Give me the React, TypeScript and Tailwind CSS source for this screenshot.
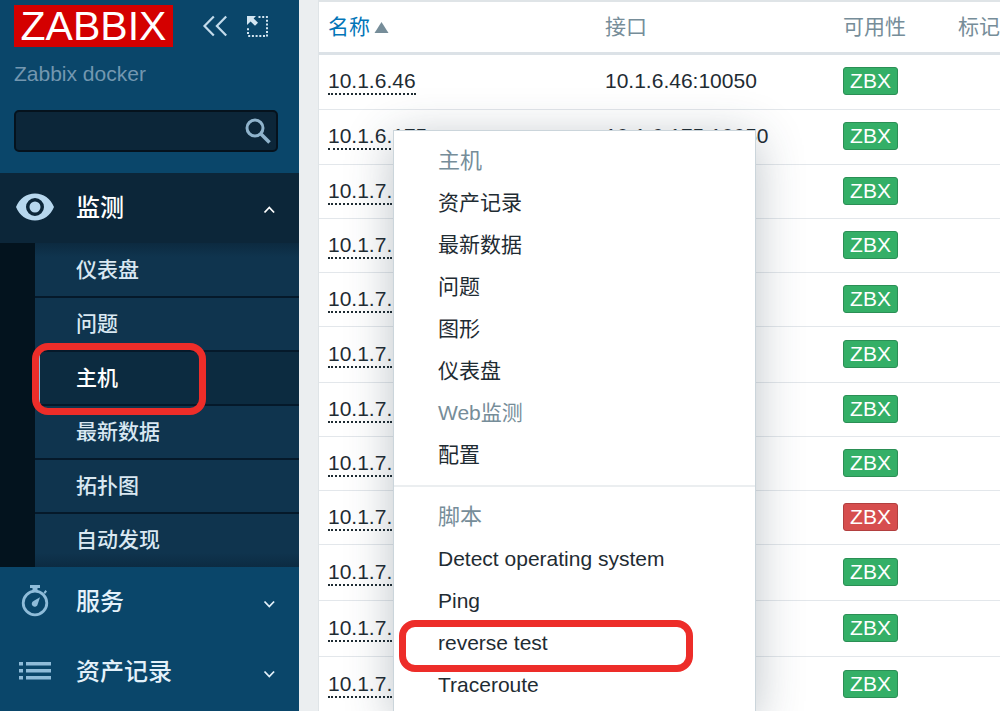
import type { ReactNode } from "react";

type Host = { name: string; address?: string; available: boolean; height: string };

const hosts: Host[] = [
  { name: "10.1.6.46", address: "10.1.6.46:10050", available: true, height: "h-[54px]" },
  { name: "10.1.6.175", address: "10.1.6.175:10050", available: true, height: "h-[55px]" },
  { name: "10.1.7.", available: true, height: "h-[54px]" },
  { name: "10.1.7.", available: true, height: "h-[54px]" },
  { name: "10.1.7.", available: true, height: "h-[54px]" },
  { name: "10.1.7.", available: true, height: "h-[56px]" },
  { name: "10.1.7.", available: true, height: "h-[54px]" },
  { name: "10.1.7.", available: true, height: "h-[54px]" },
  { name: "10.1.7.", available: false, height: "h-[54px]" },
  { name: "10.1.7.", available: true, height: "h-[56px]" },
  { name: "10.1.7.", available: true, height: "h-[56px]" },
  { name: "10.1.7.", available: true, height: "h-[56px]" },
];

const monitoring = ["仪表盘", "问题", "主机", "最新数据", "拓扑图", "自动发现"];
const hostActions = ["资产记录", "最新数据", "问题", "图形", "仪表盘", "Web监测", "配置"];
const scripts = ["Detect operating system", "Ping", "reverse test", "Traceroute"];

function Chevron({ up = false }: { up?: boolean }) {
  return (
    <svg className="h-3 w-3" viewBox="0 0 12 12" fill="none" stroke="currentColor" strokeWidth="1.800">
      <path d={up ? "M1.500 10.500 6.300 5.500l4.800 5" : "M1.500 5.500 6.300 10.500l4.800-5"} />
    </svg>
  );
}

function EyeIcon() {
  return (
    <svg className="h-10 w-10" viewBox="0 0 40 40">
      <path
        fill="#b7d7ee"
        fillRule="evenodd"
        d="M1 19C4.500 10.500 11.500 5.500 20 5.500S35.500 10.500 39 19C35.500 27.500 28.500 32.500 20 32.500S4.500 27.500 1 19ZM20 10a9 9 0 1 0 0 18a9 9 0 0 0 0-18ZM20 13.500a5.500 5.500 0 1 1 0 11a5.500 5.500 0 0 1 0-11Z"
      />
    </svg>
  );
}

function StopwatchIcon() {
  return (
    <svg className="h-10 w-10" viewBox="0 0 40 40">
      <circle cx="20" cy="21" r="11.800" fill="none" stroke="#8fbcd9" strokeWidth="2.800" />
      <path fill="#8fbcd9" d="M15 3h10v3h-2.500v3h-5V6H15ZM28.500 10.500l2-2.500 1.500 1.500-2 2.500ZM25 15.200l-2.300 7a3 3 0 1 1-4.200-3.200Z" />
    </svg>
  );
}

function ListIcon() {
  return (
    <svg className="h-10 w-10" viewBox="0 0 40 40" fill="#8fbcd9">
      <path d="M4 10h4v3.500H4ZM11 10h25v3.500H11ZM4 17h4v3.500H4ZM11 17h25v3.500H11ZM4 24h4v3.500H4ZM11 24h25v3.500H11Z" />
    </svg>
  );
}

function SectionButton({ icon, label, open = false }: { icon: ReactNode; label: string; open?: boolean }) {
  return (
    <button
      type="button"
      aria-expanded={open}
      className={
        open
          ? "flex h-[70px] w-full items-center bg-[#0c2639] pr-6 pl-[15px] text-white"
          : "flex h-[70px] w-full items-center pr-6 pl-[15px] text-[#e4f1fa]"
      }
    >
      {icon}
      <span className="ml-[21px] flex-1 text-left text-[24px] leading-8 font-medium">{label}</span>
      <Chevron up={open} />
    </button>
  );
}

function Sidebar() {
  return (
    <aside className="flex w-[299px] shrink-0 flex-col bg-[#0a466a]">
      <div className="px-[14px] pt-[5px]">
        <div className="flex items-center">
          <a href="#home" className="flex h-[42px] w-[159px] items-center justify-center bg-[#d40000] text-[41px] leading-[42px] text-white">
            ZABBIX
          </a>
          <button type="button" aria-label="Collapse" className="ml-7">
            <svg className="h-6 w-7" viewBox="0 0 28 24" fill="none" stroke="#c3dbeb" strokeWidth="2.200">
              <path d="m12.800 2.500-9.300 9.500 9.300 9.500M25.200 2.500 15.900 12l9.300 9.500" />
            </svg>
          </button>
          <button type="button" aria-label="Hide" className="ml-4">
            <svg className="h-6 w-6" viewBox="0 0 24 24">
              <path fill="#d3e5f1" d="M2 2h9L8.600 4.400l4.400 4.400-3 3-4.400-4.400L2 11Z" />
              <path
                fill="none"
                stroke="#d3e5f1"
                strokeWidth="2"
                strokeDasharray="2 1.700"
                d="M13.500 3H23M22 5.800V23M20 22H2M3 20V12.500"
              />
            </svg>
          </button>
        </div>
        <p className="mt-[13px] text-[21px] leading-7 text-[#7397b0]">Zabbix docker</p>
        <form role="search" className="mt-[22px] mr-[7px] flex h-[42px] items-center rounded-[5px] border-2 border-[#05121d] bg-[#0c2639] pr-1">
          <input aria-label="Search" type="text" className="h-full min-w-0 flex-1 bg-transparent px-2 text-[21px] text-white outline-none" />
          <button type="submit" aria-label="Submit search">
            <svg className="h-7 w-7" viewBox="0 0 28 28" fill="none" stroke="#8fb3cc">
              <circle cx="11" cy="11" r="8" strokeWidth="3" />
              <path strokeWidth="3.600" d="m17 17 8.500 8.500" />
            </svg>
          </button>
        </form>
      </div>
      <nav className="mt-[21px]">
        <SectionButton icon={<EyeIcon />} label="监测" open />
        <div className="bg-[#03131e] pl-[35px]">
          <ul className="bg-[linear-gradient(#0c2a40,#0f344e_14px,#0f344e_310px,#0c2b42)] py-px">
            {monitoring.map((label) => (
              <li key={label} className="relative border-b-2 border-[#05192a] last:border-b-0">
                <a
                  href="#monitoring"
                  className={
                    label === "主机"
                      ? "flex h-[52px] items-center border-l-[5px] border-[#8fbcd9] bg-[#0c2b40] pl-9 text-[21px] leading-7 font-medium text-white"
                      : "flex h-[52px] items-center pl-[41px] text-[21px] leading-7 font-medium text-[#d9e8f2]"
                  }
                >
                  {label}
                </a>
                {label === "主机" && (
                  <span className="pointer-events-none absolute -top-[9px] -left-[3px] z-10 h-[72px] w-[174px] rounded-[16px] border-[7px] border-[#ed2d29]" />
                )}
              </li>
            ))}
          </ul>
        </div>
        <SectionButton icon={<StopwatchIcon />} label="服务" />
        <SectionButton icon={<ListIcon />} label="资产记录" />
      </nav>
    </aside>
  );
}

function HostTable() {
  const head = "border-t-2 border-b-[3px] border-t-[#dfe4e7] border-b-[#dce2e7] p-0 text-left font-normal whitespace-nowrap text-[#768d99]";
  return (
    <table className="w-full table-fixed border-separate border-spacing-0 border-l border-[#dfe4e7] bg-white text-[21px] leading-6 text-[#1f2c33]">
      <thead>
        <tr className="h-[55px]">
          <th className={`${head} w-[286px]`}>
            <a href="#name" className="flex items-center gap-1 pl-[9px] text-[#0275b8]">
              名称
              <svg className="h-3 w-[15px]" viewBox="0 0 15 12" fill="#768d99">
                <path d="M7.500 1 14.500 12H.500Z" />
              </svg>
            </a>
          </th>
          <th className={`${head} w-[238px]`}>接口</th>
          <th className={`${head} w-[115px]`}>可用性</th>
          <th className={head}>标记</th>
        </tr>
      </thead>
      <tbody className="[&_td]:border-t [&_td]:border-[#e3e7eb] [&_td]:p-0 [&_tr:first-child_td]:border-t-0">
        {hosts.map((host, i) => (
          <tr key={i} className={host.height}>
            <td>
              <div className="pl-[9px]">
                <button type="button" className="block border-b-2 border-dotted border-[#1f2c33]">
                  {host.name}
                </button>
              </div>
            </td>
            <td>
              <div className="pb-[2px]">{host.address}</div>
            </td>
            <td>
              <div className="pb-[2px]">
                <button
                  type="button"
                  className={
                    host.available
                      ? "block h-7 w-[55px] rounded-[3px] border border-[#2b8f55] bg-[#34af67] leading-[26px] text-white"
                      : "block h-7 w-[55px] rounded-[3px] border border-[#b23f3f] bg-[#d64e4e] leading-[26px] text-white"
                  }
                >
                  ZBX
                </button>
              </div>
            </td>
            <td />
          </tr>
        ))}
      </tbody>
    </table>
  );
}

function MenuItem({ label }: { label: string }) {
  return (
    <li className="relative">
      <a
        href="#action"
        className={
          label === "Web监测"
            ? "flex h-[42px] items-center pl-11 text-[#768d99]"
            : "flex h-[42px] items-center pl-11"
        }
      >
        {label}
      </a>
      {label === "reverse test" && (
        <span className="pointer-events-none absolute -top-0.5 left-[5px] z-10 h-[52px] w-[294px] rounded-[16px] border-[7px] border-[#ed2d29]" />
      )}
    </li>
  );
}

function HostMenu() {
  const title = "flex h-[42px] items-center pl-11 text-[22px] text-[#768d99]";
  return (
    <div className="absolute top-[130px] left-[94px] w-[363px] border border-[#cbd5db] bg-white pb-2 text-[21px] leading-7 text-[#1f2c33] shadow-[0_8px_44px_rgba(40,60,75,0.3)]">
      <section className="pt-[9px] pb-[9px]">
        <h3 className={title}>主机</h3>
        <ul>
          {hostActions.map((label) => (
            <MenuItem key={label} label={label} />
          ))}
        </ul>
      </section>
      <section className="border-t-2 border-[#ebeef0] pt-[9px]">
        <h3 className={title}>脚本</h3>
        <ul>
          {scripts.map((label) => (
            <MenuItem key={label} label={label} />
          ))}
        </ul>
      </section>
    </div>
  );
}

export default function App() {
  return (
    <div className="flex h-screen overflow-hidden bg-[#ebeef0] font-['Liberation_Sans','Noto_Sans_CJK_SC',sans-serif]">
      <Sidebar />
      <main className="relative min-w-0 flex-1 overflow-hidden pl-[19px]">
        <HostTable />
        <HostMenu />
      </main>
    </div>
  );
}
